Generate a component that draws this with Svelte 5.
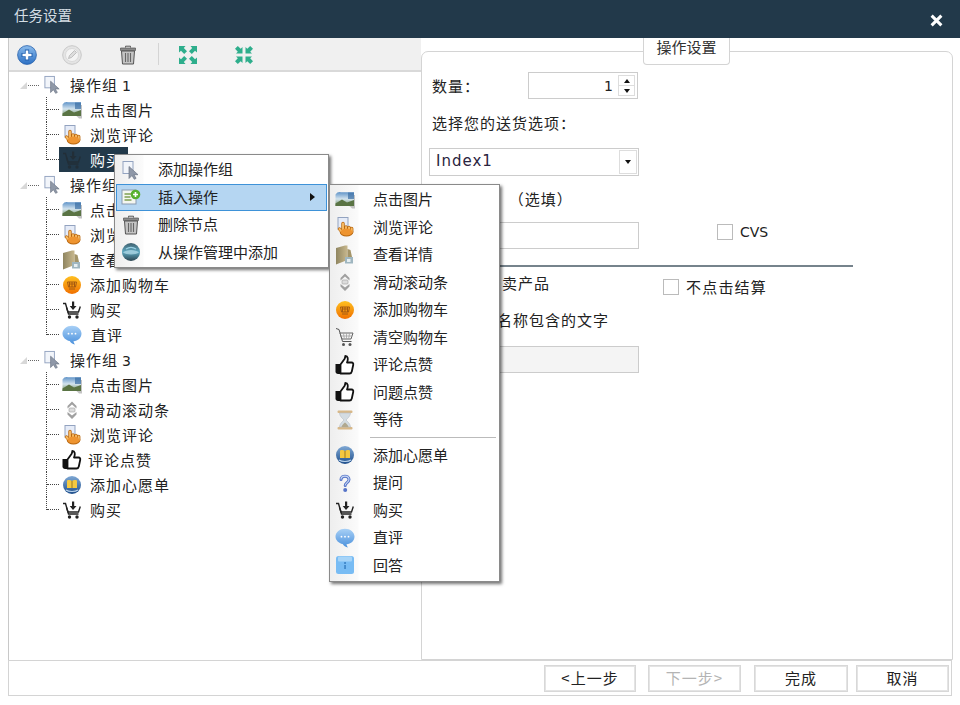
<script>
  const groups = [
    { name: '操作组', no: '1', items: [
      { i: 'image', t: '点击图片' }, { i: 'hand', t: '浏览评论' }, { i: 'buy', t: '购买', selected: true }
    ]},
    { name: '操作组', no: '2', items: [
      { i: 'image', t: '点击图片' }, { i: 'hand', t: '浏览评论' }, { i: 'detail', t: '查看详情' },
      { i: 'orange', t: '添加购物车' }, { i: 'buy', t: '购买' }, { i: 'chat', t: '直评', shift: 'r' }
    ]},
    { name: '操作组', no: '3', items: [
      { i: 'image', t: '点击图片' }, { i: 'scroll', t: '滑动滚动条' }, { i: 'hand', t: '浏览评论' },
      { i: 'thumb', t: '评论点赞', shift: 'l' }, { i: 'book', t: '添加心愿单' }, { i: 'buy', t: '购买' }
    ]}
  ];
  const menu1 = [
    { i: 'cursor', t: '添加操作组' }, { i: 'addlist', t: '插入操作', active: true },
    { i: 'trash', t: '删除节点' }, { i: 'globe', t: '从操作管理中添加' }
  ];
  const menu2a = [
    { i: 'image', t: '点击图片' }, { i: 'hand', t: '浏览评论' }, { i: 'detail', t: '查看详情' },
    { i: 'scroll', t: '滑动滚动条' }, { i: 'orange', t: '添加购物车' }, { i: 'cart', t: '清空购物车' },
    { i: 'thumb', t: '评论点赞' }, { i: 'thumb', t: '问题点赞' }, { i: 'hourglass', t: '等待' }
  ];
  const menu2b = [
    { i: 'book', t: '添加心愿单' }, { i: 'question', t: '提问' }, { i: 'buy', t: '购买' },
    { i: 'chat', t: '直评' }, { i: 'info', t: '回答' }
  ];
</script>

{#snippet icon(name, cls = '')}
  <svg class="ic {cls}" viewBox="0 0 20 20" aria-hidden="true"><use href="#i-{name}" /></svg>
{/snippet}

{#snippet menuItem(m)}
  <div class="mi" class:active={m.active}>
    <span class="gut">{@render icon(m.i)}</span>
    <span class="mt">{m.t}</span>
    {#if m.active}<span class="caret"></span>{/if}
  </div>
{/snippet}

<svg class="defs" width="0" height="0" aria-hidden="true">
  <defs>
    <linearGradient id="g-sky" x1="0" y1="0" x2="0" y2="1"><stop offset="0" stop-color="#5f93c8"/><stop offset=".5" stop-color="#d4e4ee"/><stop offset="1" stop-color="#6d8a5a"/></linearGradient>
    <linearGradient id="g-orange" x1="0" y1="0" x2="0" y2="1"><stop offset="0" stop-color="#ffc020"/><stop offset="1" stop-color="#f07000"/></linearGradient>
    <linearGradient id="g-blue" x1="0" y1="0" x2="0" y2="1"><stop offset="0" stop-color="#a8d0f6"/><stop offset="1" stop-color="#4a90dc"/></linearGradient>
    <linearGradient id="g-plus" x1="0" y1="0" x2="0" y2="1"><stop offset="0" stop-color="#8cbcec"/><stop offset="1" stop-color="#2c70c4"/></linearGradient>
    <linearGradient id="g-folder" x1="0" y1="0" x2="1" y2="0"><stop offset="0" stop-color="#8f8560"/><stop offset="1" stop-color="#c8b88e"/></linearGradient>
    <linearGradient id="g-orb" x1="0" y1="0" x2="0" y2="1"><stop offset="0" stop-color="#7fa8d4"/><stop offset="1" stop-color="#1f4f8c"/></linearGradient>
    <linearGradient id="g-globe" x1="0" y1="0" x2="0" y2="1"><stop offset="0" stop-color="#40606e"/><stop offset=".5" stop-color="#5ea8c0"/><stop offset="1" stop-color="#2c4450"/></linearGradient>

    <symbol id="i-cursor" viewBox="0 0 20 20">
      <rect x="2" y="1.5" width="10" height="12" fill="#f2f5fa" stroke="#93a3c0"/>
      <path d="M8 6.500v12l3-3 2.300 3.800 1.800-1-2.200-3.600h4.100z" fill="#8f98a8" stroke="#6b7484" stroke-width=".7"/>
    </symbol>
    <symbol id="i-image" viewBox="0 0 20 20">
      <path d="M3 5h17v13.500h-3z" fill="#c4c4c4"/>
      <path d="M0.500 4.500Q2.500 1.500 6 2.200h13V16H0.500z" fill="url(#g-sky)"/>
      <path d="M0.500 13.500 7 9.500l5 3 7-2.500V16H0.500z" fill="#5a7444"/>
      <path d="M13 2.500h6v6.500h-6z" fill="#3a6ea4" opacity=".7"/>
    </symbol>
    <symbol id="i-hand" viewBox="0 0 20 20">
      <rect x="3" y="0.500" width="10" height="11.500" fill="#e6ecf8" stroke="#93a3c0"/>
      <g fill="none" stroke="#b8660e" stroke-width="3.400" stroke-linecap="round">
        <path d="M8 6.500V14M11 10v4M14 10.500V14M16.700 11.500V15"/>
      </g>
      <ellipse cx="11.500" cy="15" rx="6.800" ry="4.500" fill="#b8660e"/>
      <path d="M4.500 12l3.500 4" stroke="#b8660e" stroke-width="3.400" stroke-linecap="round"/>
      <g fill="none" stroke="#f6b860" stroke-width="2" stroke-linecap="round">
        <path d="M8 6.500V14M11 10v4M14 10.500V14M16.700 11.500V15M4.500 12l3.500 4"/>
      </g>
      <ellipse cx="11.500" cy="15" rx="5.800" ry="3.600" fill="#ee9430"/>
    </symbol>
    <symbol id="i-detail" viewBox="0 0 20 20">
      <path d="M1 3l9-2.500h2.500V15L1 19.500z" fill="url(#g-folder)"/>
      <path d="M12.500 4l3 1 1.500 7h-4.500z" fill="#a39468"/>
      <path d="M10 12h8v6.500h-8z" fill="#9fb6c0"/>
      <path d="M12 14h3.500v3H12z" fill="#e6eff2"/>
    </symbol>
    <symbol id="i-orange" viewBox="0 0 20 20">
      <circle cx="10" cy="10" r="9" fill="url(#g-orange)"/>
      <path d="M5.500 7h9l-1 5h-7zM7 9h6M7.500 7v5M10 7v5M12.500 7v5M7 14h6" fill="none" stroke="#a55a10" stroke-width="1"/>
    </symbol>
    <symbol id="i-buy" viewBox="0 0 20 20">
      <path d="M1 3.500h2.500L6.500 14h10" fill="none" stroke="#222" stroke-width="1.400"/>
      <path d="M4.500 7.500l1.500 4.500h10.500l1.800-5.500" fill="none" stroke="#222" stroke-width="1.400"/>
      <path d="M10 1.500h2.200V6h2.300L11 10 7.700 6H10z" fill="#222"/>
      <circle cx="7.500" cy="17" r="1.700" fill="#222"/><circle cx="15" cy="17" r="1.700" fill="#222"/>
    </symbol>
    <symbol id="i-cart" viewBox="0 0 20 20">
      <path d="M1 1.500l3 1 3.500 12h9" fill="none" stroke="#555" stroke-width="1"/>
      <path d="M5 6h13l-2 6H7z" fill="#f4f4f4" stroke="#666" stroke-width="1"/>
      <path d="M8.500 6.500l.8 5M11.500 6.500v5M14.500 6.500l-.8 5M6 9h11" stroke="#999" stroke-width=".7"/>
      <circle cx="8.500" cy="17.500" r="1.500" fill="#555"/><circle cx="15" cy="17.500" r="1.500" fill="#555"/>
    </symbol>
    <symbol id="i-chat" viewBox="0 0 20 20">
      <path d="M10 .8c5.200 0 9.500 3.400 9.500 7.700s-3.500 7.500-8 7.700c.2 1.200.6 2.200 1.500 3.300-2.500-.5-4.300-1.700-5.300-3.500C3.800 15.300.5 12.300.5 8.500.5 4.200 4.800.8 10 .8z" fill="url(#g-blue)"/>
      <circle cx="6.500" cy="8.700" r=".9" fill="#fff"/><circle cx="10" cy="8.700" r=".9" fill="#fff"/><circle cx="13.500" cy="8.700" r=".9" fill="#fff"/>
    </symbol>
    <symbol id="i-thumb" viewBox="0 0 20 20">
      <path d="M0.500 9h5.500v10H3c-1.500 0-2.500-.9-2.500-2.500z" fill="#111"/>
      <path d="M5.500 9.500 9.500 4c.5-1 .8-2 .8-3 2.700 0 3.200 3 1.700 6.500h4.500c1.500 0 2 1.300 1.700 2.500l-1.400 6.500c-.3 1.300-1 2-2.300 2H5.500z" fill="#fff" stroke="#111" stroke-width="1.800" stroke-linejoin="round"/>
    </symbol>
    <symbol id="i-book" viewBox="0 0 20 20">
      <circle cx="10" cy="10" r="9" fill="url(#g-orb)"/>
      <path d="M5 5.500c2-.7 3.700-.5 5 .5 1.300-1 3-1.200 5-.5v7.500H5z" fill="#f4c840"/>
      <path d="M10 6v7" stroke="#9a7a20" stroke-width="1"/>
      <path d="M4 15c3 2 9 2 12 0" stroke="#bcd4ec" stroke-width="1.200" fill="none"/>
    </symbol>
    <symbol id="i-scroll" viewBox="0 0 20 20">
      <path d="M5.500 6 10 1.500 14.500 6v2.500L10 4.500 5.500 8.500z" fill="#a0a0a0"/>
      <rect x="7" y="8" width="6" height="4" rx="1" fill="#dcdcdc" stroke="#a0a0a0" stroke-width=".6"/>
      <path d="M5.500 12 10 15.500 14.500 12v2.500L10 19l-4.500-4.500z" fill="#a0a0a0"/>
    </symbol>
    <symbol id="i-hourglass" viewBox="0 0 20 20">
      <rect x="2.500" y="0.500" width="15" height="2.500" rx="1" fill="#d8b888"/>
      <rect x="2.500" y="17" width="15" height="2.500" rx="1" fill="#d8b888"/>
      <path d="M4.500 3h11c0 3-3 5.500-4.500 7 1.500 1.500 4.500 4 4.500 7h-11c0-3 3-5.500 4.500-7-1.500-1.500-4.500-4-4.500-7z" fill="#d4dce2" stroke="#b8bec4" stroke-width=".6"/>
      <path d="M6.500 17c0-1.800 2.500-3.500 3.500-4.500 1 1 3.500 2.700 3.500 4.500z" fill="#b0a890"/>
    </symbol>
    <symbol id="i-question" viewBox="0 0 20 20">
      <path d="M6 6.500C6 2 14 2 14 6.500c0 3-3.800 3.200-3.800 6" fill="none" stroke="#5674c8" stroke-width="3" stroke-linecap="round"/>
      <path d="M6 6.500C6 2 14 2 14 6.500c0 3-3.800 3.200-3.800 6" fill="none" stroke="#c8d8f4" stroke-width="1.100"/>
      <circle cx="10.200" cy="17" r="2" fill="#5674c8"/>
    </symbol>
    <symbol id="i-info" viewBox="0 0 20 20">
      <rect x="1" y="1" width="18" height="18" rx="2.500" fill="#78bcf4"/>
      <rect x="3" y="1.500" width="14" height="5" rx="1" fill="#a6d4f8"/>
      <rect x="9.200" y="7" width="1.700" height="2" fill="#3f85c8"/><rect x="9.200" y="10" width="1.700" height="4" fill="#3f85c8"/>
    </symbol>
    <symbol id="i-addlist" viewBox="0 0 20 20">
      <rect x="1" y="3" width="14" height="14" fill="#f4f6f0" stroke="#8a9ab0"/>
      <path d="M3.500 7h7M3.500 10h6M3.500 13h7" stroke="#7fa050" stroke-width="1.300"/>
      <circle cx="14.500" cy="7.500" r="4.800" fill="#58b030"/>
      <path d="M14.500 5v5M12 7.500h5" stroke="#fff" stroke-width="1.600"/>
    </symbol>
    <symbol id="i-trash" viewBox="0 0 20 20">
      <path d="M7.500 2.500V1.200h5v1.300" fill="none" stroke="#555" stroke-width="1"/>
      <path d="M2.500 3h15v2.500h-15z" fill="#8a8a8a" stroke="#555" stroke-width=".7"/>
      <path d="M3.500 6h13l-1 13h-11z" fill="#c4c4c4" stroke="#555" stroke-width="1"/>
      <path d="M7.500 8v9M10 8v9M12.500 8v9" stroke="#666" stroke-width="1.100"/>
    </symbol>
    <symbol id="i-globe" viewBox="0 0 20 20">
      <circle cx="10" cy="10" r="9" fill="url(#g-globe)"/>
      <path d="M2 10.500c3-3.500 13-3.500 16 0-3 2.500-13 2.500-16 0z" fill="#bfe0ec" opacity=".65"/>
      <path d="M5 7c3-2 7-2 10 0" stroke="#9ad0e4" stroke-width="1.200" fill="none"/>
    </symbol>
    <symbol id="i-plus" viewBox="0 0 20 20">
      <circle cx="10" cy="10" r="9.400" fill="url(#g-plus)" stroke="#2a62ac" stroke-width=".8"/>
      <path d="M10 4.500v11M4.500 10h11" stroke="#2060b0" stroke-width="4.200"/>
      <path d="M10 5.500v9M5.500 10h9" stroke="#fff" stroke-width="2.600"/>
    </symbol>
    <symbol id="i-edit" viewBox="0 0 20 20">
      <circle cx="10" cy="10" r="9.300" fill="#e4e4e4" stroke="#c8c8c8" stroke-width="1"/>
      <circle cx="10" cy="10" r="6.500" fill="#f4f4f4" stroke="#d4d4d4" stroke-width=".8"/>
      <path d="M6.500 13.500l1-3 5-5 2 2-5 5z" fill="#ddd" stroke="#b4b4b4" stroke-width=".8"/>
    </symbol>
    <symbol id="i-expand" viewBox="0 0 20 20">
      <g fill="#2eae8c">
        <path d="M1 1h6.500L5.800 3 9 6.200 6.200 9 3 5.800 1 7.500z"/>
        <path d="M19 1v6.500L17 5.800 13.800 9 11 6.200 14.200 3 12.500 1z"/>
        <path d="M1 19v-6.500L3 14.200 6.200 11 9 13.800 5.800 17 7.500 19z"/>
        <path d="M19 19h-6.500L14.200 17 11 13.800 13.800 11 17 14.200 19 12.500z"/>
      </g>
    </symbol>
    <symbol id="i-collapse" viewBox="0 0 20 20">
      <g fill="#2eae8c">
        <path d="M8.500 8.500H2L3.800 6.700 1 3.800 3.800 1l2.900 2.800L8.500 2z"/>
        <path d="M11.500 8.500V2l1.800 1.800L16.200 1 19 3.800l-2.800 2.900L18 8.500z"/>
        <path d="M8.500 11.500V18l-1.800-1.800L3.800 19 1 16.200l2.800-2.900L2 11.500z"/>
        <path d="M11.500 11.500H18l-1.800 1.800 2.800 2.900L16.200 19l-2.900-2.800L11.500 18z"/>
      </g>
    </symbol>
  </defs>
</svg>

<div class="win">
  <header class="title">
    <span>任务设置</span>
    <svg class="close" viewBox="0 0 12 12" aria-hidden="true"><path d="M1.500 1.500l9 9M10.500 1.500l-9 9" stroke="#fff" stroke-width="2.800"/></svg>
  </header>

  <div class="main">
    <section class="left">
      <div class="toolbar">
        {@render icon('plus', 'tb a')}
        {@render icon('edit', 'tb b')}
        {@render icon('trash', 'tb c')}
        <span class="tbsep"></span>
        {@render icon('expand', 'tb d')}
        {@render icon('collapse', 'tb e')}
      </div>
      <div class="tree">
        {#each groups as g}
          <div class="root">
            <span class="tri"></span><span class="dash"></span>
            {@render icon('cursor', 'rooticon')}
            <span class="rname">{g.name}<span class="no">{g.no}</span></span>
          </div>
          {#each g.items as it, idx}
            <div class="child" class:last={idx === g.items.length - 1}>
              <span class="cell" class:sel={it.selected}>
                {#if it.selected}
                  <svg class="ic dim" viewBox="0 0 20 20" aria-hidden="true"><use href="#i-buy" /></svg>
                {:else}
                  {@render icon(it.i)}
                {/if}
                <span class="ctext {it.shift ?? ''}">{it.t}</span>
              </span>
            </div>
          {/each}
        {/each}
      </div>
    </section>

    <section class="right">
      <div class="legend">操作设置</div>
      <div class="form">
        <div class="qty">
          <span class="lab">数量：</span>
          <div class="spin">
            <span class="val">1</span>
            <span class="spbtns"><i class="up"></i><i class="down"></i></span>
          </div>
        </div>
        <div class="lab opt">选择您的送货选项：</div>
        <div class="select"><span class="seltext">Index1</span><span class="selbtn"><i class="down"></i></span></div>
        <div class="lab asin"><span class="n">N</span>（选填）</div>
        <div class="inrow">
          <div class="input"></div>
          <label class="chk cvs"><span class="box"></span><span class="latin">CVS</span></label>
        </div>
        <div class="rule"></div>
        <div class="rowb">
          <span class="lab sell">卖产品</span>
          <label class="chk nopay"><span class="box"></span><span>不点击结算</span></label>
        </div>
        <div class="lab pname">名称包含的文字</div>
        <div class="input disabled"></div>
      </div>
    </section>
  </div>

  <footer class="foot">
    <button class="b1">&lt;上一步</button>
    <button class="b2" disabled>下一步&gt;</button>
    <button class="b3">完成</button>
    <button class="b4">取消</button>
  </footer>

  <div class="menu m1">
    {#each menu1 as m}{@render menuItem(m)}{/each}
  </div>
  <div class="menu m2">
    {#each menu2a as m}{@render menuItem(m)}{/each}
    <div class="msep"><span></span></div>
    {#each menu2b as m}{@render menuItem(m)}{/each}
  </div>
</div>

<style>
  :global(body) { margin: 0; background: #fff; }
  .defs { position: absolute; }
  .win {
    position: relative; width: 960px; height: 705px; overflow: hidden; background: #fff;
    display: flex; flex-direction: column; color: #222;
    font-family: "Noto Sans CJK SC", "DejaVu Sans", sans-serif; font-size: 15px;
  }
  .title {
    height: 38px; flex: none; box-sizing: border-box; background: #22394a; color: #d4dde3;
    display: flex; align-items: center; justify-content: space-between;
    padding: 0 17px 9px 14px; font-size: 14.500px;
  }
  .close { width: 13px; height: 13px; margin-top: 11px; }
  .main { height: 622px; flex: none; display: flex; padding-left: 8px; padding-right: 7px; }
  .left {
    width: 413px; flex: none; box-sizing: border-box; border-left: 1px solid #c8c8c8;
    display: flex; flex-direction: column;
  }
  .toolbar {
    height: 34px; flex: none; box-sizing: border-box; background: #f0f0f0;
    border-bottom: 2px solid #d9d9d9; display: flex; align-items: center;
  }
  .ic { width: 20px; height: 20px; flex: none; display: block; }
  .ic.tb { margin-top: 1px; }
  .ic.a { margin-left: 8px; }
  .ic.b { margin-left: 25px; }
  .ic.c { margin-left: 36px; }
  .tbsep { width: 1px; height: 22px; background: #d4d4d4; margin-left: 20px; }
  .ic.d { margin-left: 19px; }
  .ic.e { margin-left: 36px; }
  .root { height: 25px; display: flex; align-items: center; padding-left: 11px; }
  .tri {
    width: 0; height: 0; border-bottom: 7px solid #d8d8d8; border-left: 7px solid transparent;
    margin-top: 1px;
  }
  .dash { width: 11px; border-top: 1px dotted #666; margin-top: 2px; margin-left: 1px; }
  .ic.rooticon { width: 19px; height: 19px; margin-left: 4px; }
  .rname { margin-left: 8px; letter-spacing: 1px; }
  .no { font-family: "DejaVu Sans", sans-serif; font-size: 14px; margin-left: 4px; }
  .child { position: relative; height: 25px; padding-left: 50px; display: flex; align-items: center; }
  .child::before {
    content: ""; position: absolute; left: 37px; top: 0; height: 25px;
    border-left: 1px dotted #444;
  }
  .child.last::before { height: 13px; }
  .child::after {
    content: ""; position: absolute; left: 38px; top: 12px; width: 12px;
    border-top: 1px dotted #444;
  }
  .cell { display: flex; align-items: center; height: 25px; padding: 0 0 0 3px; box-sizing: border-box; letter-spacing: 1px; }
  .cell .ctext { margin-left: 8px; }
  .cell .ctext.r { margin-left: 9px; }
  .cell .ctext.l { margin-left: 6px; }
  .cell.sel { background: #22394a; color: #fff; width: 69px; }
  .ic.dim { opacity: .45; }
  .right {
    position: relative; flex: 1; margin-top: 13px; box-sizing: border-box;
    border: 1px solid #d4d4d4; border-radius: 7px 7px 0 0; background: #fff;
  }
  .legend {
    position: absolute; left: 221px; top: -14px; width: 87px; height: 27px; box-sizing: border-box;
    border: 1px solid #d4d4d4; border-radius: 0 0 4px 4px; border-top: none; background: #fff;
    text-align: center; line-height: 18px; font-size: 15px; color: #333;
  }
  .form { padding: 20px 0 0 10px; display: flex; flex-direction: column; align-items: flex-start; }
  .lab { line-height: 22px; letter-spacing: 1px; }
  .qty { display: flex; align-items: center; height: 27px; }
  .qty .lab { width: 96px; }
  .spin {
    width: 110px; height: 27px; box-sizing: border-box; border: 1px solid #ccc;
    display: flex; justify-content: flex-end; align-items: center; padding-right: 2px;
  }
  .val { font-family: "DejaVu Sans", sans-serif; font-size: 14px; margin-right: 5px; }
  .spbtns { width: 17px; height: 21px; display: flex; flex-direction: column; border: 1px solid #ddd; box-sizing: border-box; }
  .spbtns i { flex: 1; display: flex; align-items: center; justify-content: center; }
  .spbtns i + i { border-top: 1px solid #ddd; }
  .up::after { content: ""; border: 3.500px solid transparent; border-bottom: 4px solid #111; border-top: none; }
  .down::after { content: ""; border: 3.500px solid transparent; border-top: 4px solid #111; border-bottom: none; }
  .opt { margin-top: 13px; }
  .select {
    margin: 14px 0 0 -3px; width: 210px; height: 28px; box-sizing: border-box; border: 1px solid #ccc;
    display: flex; align-items: center; justify-content: space-between; padding: 0 1px 0 6px;
    font-family: "DejaVu Sans", sans-serif; font-size: 15px; letter-spacing: 1px; color: #2a2440;
  }
  .seltext { padding-bottom: 2px; }
  .selbtn { width: 18px; height: 24px; box-sizing: border-box; border: 1px solid #ddd; display: flex; align-items: center; justify-content: center; }
  .selbtn i { display: flex; }
  .asin { margin: 12px 0 0 58px; }
  .n { margin-right: 7px; }
  .inrow { display: flex; align-items: flex-start; margin: 12px 0 0 -3px; }
  .input { width: 210px; height: 27px; box-sizing: border-box; border: 1px solid #ccc; }
  .input.disabled { background: #f4f4f4; margin: 15px 0 0 -3px; }
  .chk { display: flex; align-items: center; }
  .box { width: 16px; height: 16px; box-sizing: border-box; border: 1px solid #bbb; flex: none; background: #fff; }
  .cvs { margin: 2px 0 0 78px; gap: 7px; }
  .latin { font-family: "DejaVu Sans", sans-serif; font-size: 14px; line-height: 16px; }
  .rule { width: 421px; height: 2px; background: #76838c; margin-top: 16px; }
  .rowb { display: flex; align-items: flex-start; height: 32px; }
  .sell { margin: 5px 0 0 70px; }
  .nopay { margin: 12px 0 0 113px; gap: 7px; letter-spacing: 1.200px; line-height: 16px; }
  .pname { margin: 10px 0 0 65px; }
  .foot {
    height: 36px; flex: none; box-sizing: border-box; margin: 0 8px; border: 1px solid #d4d4d4;
    display: flex; align-items: center; position: relative;
  }
  button {
    height: 27px; box-sizing: border-box; background: #fff; border: 1px solid #d8d8d8;
    padding: 0 0 2px; font: inherit; font-size: 15px; letter-spacing: 1px; color: #222; outline: 1px solid #e4e4e4;
    outline-offset: -2px;
  }
  button:disabled { color: #b4b4b4; }
  .b1 { width: 92px; margin-left: 535px; }
  .b2 { width: 93px; margin-left: 12px; }
  .b3 { width: 94px; margin-left: 13px; }
  .b4 { width: 93px; margin-left: 8px; }
  .menu {
    position: absolute; box-sizing: border-box; background: #fff; border: 1px solid #8a8a8a;
    padding: 1px; box-shadow: 2px 2px 3px rgba(0,0,0,.55);
    background-image: linear-gradient(to right, #eeeeee 0, #fbfbfb 28px, #fff 29px);
    background-repeat: no-repeat;
  }
  .m1 { left: 114px; top: 154px; width: 215px; height: 114px; }
  .m2 { left: 329px; top: 184px; width: 171px; height: 398px; }
  .mi { height: 27.500px; display: flex; align-items: center; position: relative; box-sizing: border-box; }
  .gut { width: 29px; flex: none; display: flex; justify-content: center; }
  .mt { margin-left: 13px; white-space: nowrap; padding-bottom: 2px; }
  .m2 .gut { width: 28px; }
  .m2 .mt { margin-left: 14px; }
  .mi.active { background: #b5d6f2; outline: 1px solid #3e92d8; outline-offset: -1px; }
  .caret {
    position: absolute; right: 12px; top: 9px; width: 0; height: 0;
    border-left: 5px solid #111; border-top: 4.500px solid transparent; border-bottom: 4.500px solid transparent;
  }
  .msep { height: 7.750px; display: flex; align-items: center; padding-left: 39px; }
  .msep span { flex: 1; height: 1.500px; background: #bbb; margin-right: 2px; }
</style>
